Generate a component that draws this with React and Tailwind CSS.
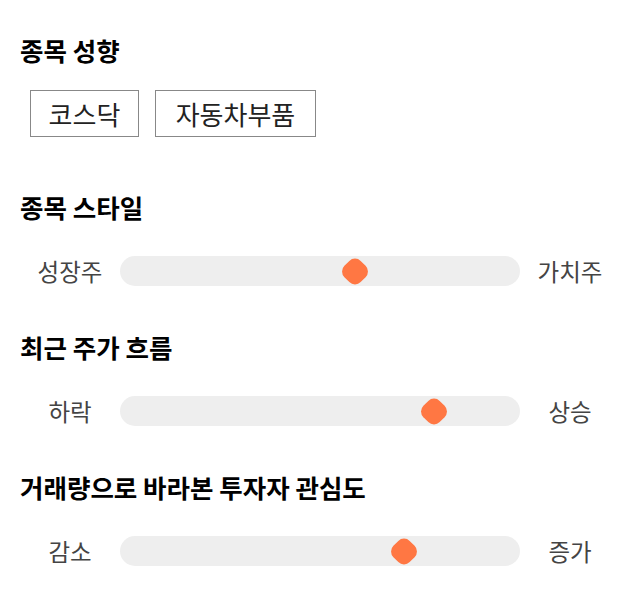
const font = { fontFamily: '"Noto Sans CJK KR", "Noto Sans", sans-serif' };

const sliders = [
  { title: "종목 스타일", left: "성장주", right: "가치주", value: 0.588 },
  { title: "최근 주가 흐름", left: "하락", right: "상승", value: 0.786 },
  { title: "거래량으로 바라본 투자자 관심도", left: "감소", right: "증가", value: 0.711 },
];

function Slider({ left, right, value }) {
  return (
    <div className="grid grid-cols-[100px_1fr_100px] items-center">
      <div className="text-center text-[23.5px] leading-[30px] text-[#444]">{left}</div>
      <div className="relative h-[30px] rounded-[15px] bg-[#eeeeee]">
        {/* thumb is a rounded square turned 45deg */}
        <div
          className="absolute top-[3.5px] h-[23px] w-[23px] -translate-x-1/2 rotate-45 rounded-[8px] bg-[#ff7743]"
          style={{ left: `${value * 100}%` }}
        />
      </div>
      <div className="text-center text-[23.5px] leading-[30px] text-[#444]">{right}</div>
    </div>
  );
}

export default function App() {
  return (
    <div className="w-[640px] h-[606px] bg-white px-5 pt-[34px]" style={font}>
      <h2 className="text-[25.5px] leading-[32px] font-bold text-black">종목 성향</h2>
      <div className="mt-[24px] ml-[10px] flex gap-4">
        <div className="flex h-[47px] w-[109px] items-center justify-center border border-[#888] text-[26px] text-[#222]">
          코스닥
        </div>
        <div className="flex h-[47px] w-[161px] items-center justify-center border border-[#888] text-[26px] text-[#222]">
          자동차부품
        </div>
      </div>

      {sliders.map((s, i) => (
        <div key={s.title} className={i === 0 ? "mt-[54px]" : "mt-[45px]"}>
          <h2 className="text-[25.5px] leading-[32px] font-bold text-black">{s.title}</h2>
          <div className="mt-[33px]">
            <Slider left={s.left} right={s.right} value={s.value} />
          </div>
        </div>
      ))}
    </div>
  );
}
